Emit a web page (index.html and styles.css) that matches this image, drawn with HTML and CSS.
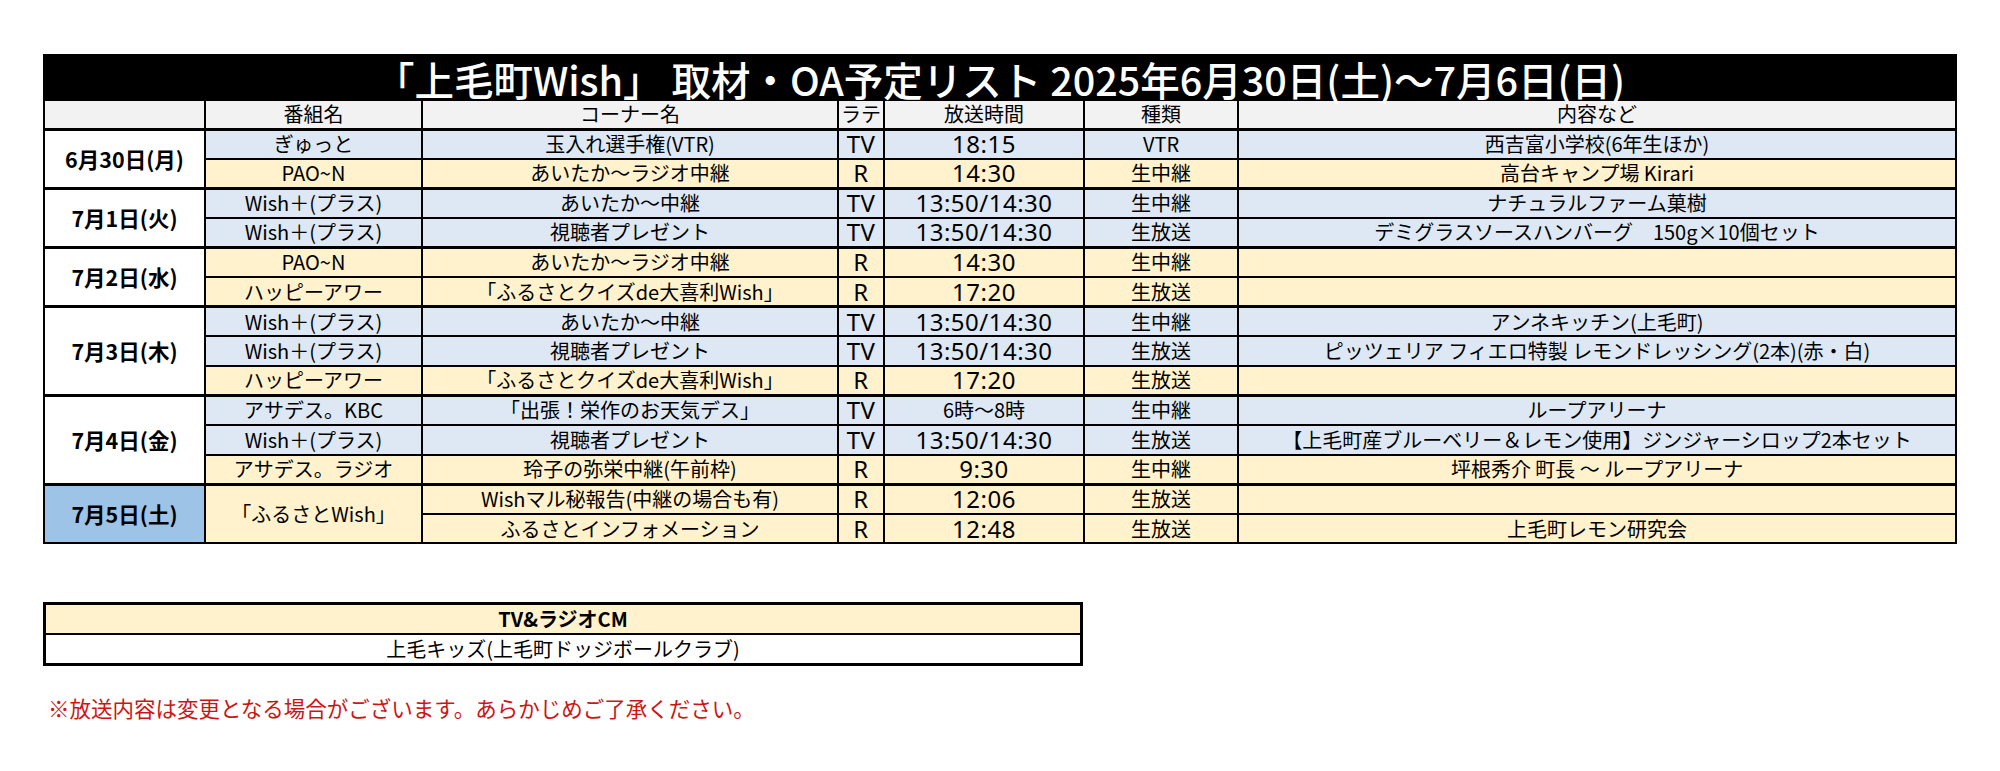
FILE: index.html
```html
<!DOCTYPE html>
<html lang="ja">
<head>
<meta charset="utf-8">
<title>「上毛町Wish」取材・OA予定リスト</title>
<link rel="stylesheet" href="styles.css">
</head>
<body>
<div class="page">
  <table class="sched">
    <colgroup>
      <col class="c-date"><col class="c-prog"><col class="c-corner"><col class="c-lt"><col class="c-time"><col class="c-type"><col class="c-content">
    </colgroup>
    <thead>
      <tr class="title-row"><th colspan="7" class="title">「上毛町Wish」 取材・OA予定リスト 2025年6月30日(土)～7月6日(日)</th></tr>
      <tr class="head-row"><th></th><th>番組名</th><th>コーナー名</th><th>ラテ</th><th>放送時間</th><th>種類</th><th>内容など</th></tr>
    </thead>
    <tbody>
      <tr class="tv grp"><td class="date" rowspan="2">6月30日(月)</td><td>ぎゅっと</td><td>玉入れ選手権(VTR)</td><td class="n">TV</td><td class="n">18:15</td><td>VTR</td><td>西吉富小学校(6年生ほか)</td></tr>
      <tr class="r"><td>PAO~N</td><td>あいたか～ラジオ中継</td><td class="n">R</td><td class="n">14:30</td><td>生中継</td><td>高台キャンプ場 Kirari</td></tr>
      <tr class="tv grp"><td class="date" rowspan="2">7月1日(火)</td><td>Wish＋(プラス)</td><td>あいたか～中継</td><td class="n">TV</td><td class="n">13:50/14:30</td><td>生中継</td><td>ナチュラルファーム菓樹</td></tr>
      <tr class="tv"><td>Wish＋(プラス)</td><td>視聴者プレゼント</td><td class="n">TV</td><td class="n">13:50/14:30</td><td>生放送</td><td>デミグラスソースハンバーグ　150g×10個セット</td></tr>
      <tr class="r grp"><td class="date" rowspan="2">7月2日(水)</td><td>PAO~N</td><td>あいたか～ラジオ中継</td><td class="n">R</td><td class="n">14:30</td><td>生中継</td><td></td></tr>
      <tr class="r"><td>ハッピーアワー</td><td>「ふるさとクイズde大喜利Wish」</td><td class="n">R</td><td class="n">17:20</td><td>生放送</td><td></td></tr>
      <tr class="tv grp"><td class="date" rowspan="3">7月3日(木)</td><td>Wish＋(プラス)</td><td>あいたか～中継</td><td class="n">TV</td><td class="n">13:50/14:30</td><td>生中継</td><td>アンネキッチン(上毛町)</td></tr>
      <tr class="tv"><td>Wish＋(プラス)</td><td>視聴者プレゼント</td><td class="n">TV</td><td class="n">13:50/14:30</td><td>生放送</td><td>ピッツェリア フィエロ特製 レモンドレッシング(2本)(赤・白)</td></tr>
      <tr class="r"><td>ハッピーアワー</td><td>「ふるさとクイズde大喜利Wish」</td><td class="n">R</td><td class="n">17:20</td><td>生放送</td><td></td></tr>
      <tr class="tv grp"><td class="date" rowspan="3">7月4日(金)</td><td>アサデス。KBC</td><td>「出張！栄作のお天気デス」</td><td class="n">TV</td><td>6時～8時</td><td>生中継</td><td>ループアリーナ</td></tr>
      <tr class="tv"><td>Wish＋(プラス)</td><td>視聴者プレゼント</td><td class="n">TV</td><td class="n">13:50/14:30</td><td>生放送</td><td>【上毛町産ブルーベリー＆レモン使用】ジンジャーシロップ2本セット</td></tr>
      <tr class="r"><td>アサデス。ラジオ</td><td>玲子の弥栄中継(午前枠)</td><td class="n">R</td><td class="n">9:30</td><td>生中継</td><td>坪根秀介 町長 ～ ループアリーナ</td></tr>
      <tr class="r grp"><td class="date sat" rowspan="2">7月5日(土)</td><td rowspan="2">「ふるさとWish」</td><td>Wishマル秘報告(中継の場合も有)</td><td class="n">R</td><td class="n">12:06</td><td>生放送</td><td></td></tr>
      <tr class="r"><td>ふるさとインフォメーション</td><td class="n">R</td><td class="n">12:48</td><td>生放送</td><td>上毛町レモン研究会</td></tr>
    </tbody>
  </table>

  <table class="cm">
    <tr><th class="cm-head">TV&amp;ラジオCM</th></tr>
    <tr><td class="cm-body">上毛キッズ(上毛町ドッジボールクラブ)</td></tr>
  </table>

  <p class="note">※放送内容は変更となる場合がございます。あらかじめご了承ください。</p>
</div>
</body>
</html>
```
FILE: styles.css
```css
body {
  margin: 0;
  background: #ffffff;
  font-family: "Noto Sans CJK JP", "Noto Sans", sans-serif;
  color: #000;
}
.page {
  padding: 54px 0 0 43px;
}
.sched {
  border-collapse: collapse;
  table-layout: fixed;
  width: 1912px;
}
.c-date { width: 161px; }
.c-prog { width: 217px; }
.c-corner { width: 416px; }
.c-lt { width: 46px; }
.c-time { width: 200px; }
.c-type { width: 154px; }
.c-content { width: 718px; }

.sched th,
.sched td {
  border: 2px solid #000;
  padding: 0;
  text-align: center;
  vertical-align: middle;
  font-size: 20px;
  line-height: 1;
  font-weight: 400;
  white-space: nowrap;
}
.title-row { height: 45px; }
.sched .title {
  background: #000;
  color: #fff;
  font-size: 39.5px;
  line-height: 40px;
  font-weight: 500;
  padding-top: 2px;
}
.head-row { height: 29px; }
.head-row th {
  background: #f2f2f2;
}
.sched tbody tr { height: 29.6px; }
.sched tr.grp td { border-top-width: 3px; }
.tv td { background: #dde8f4; }
.r td { background: #fff2cc; }
.sched td.n {
  font-size: 24px;
  font-family: "Noto Sans", "Noto Sans CJK JP", sans-serif;
  letter-spacing: 0.5px;
}
.sched td.date {
  background: #ffffff;
  font-weight: 700;
  font-size: 21.5px;
}
.sched td.date.sat { background: #9dc3e6; }

.cm {
  margin-top: 58px;
  width: 1040px;
  border-collapse: collapse;
  border: 3px solid #000;
}
.cm th,
.cm td {
  height: 28px;
  padding: 0;
  text-align: center;
  font-size: 20px;
  line-height: 1;
  border: 2px solid #000;
}
.cm-head {
  background: #fff2cc;
  font-weight: 700;
}
.cm-body {
  background: #fff;
  font-weight: 400;
}
.note {
  margin: 26px 0 0 5px;
  color: #cc1515;
  font-size: 21.5px;
  line-height: 32px;
}
```
